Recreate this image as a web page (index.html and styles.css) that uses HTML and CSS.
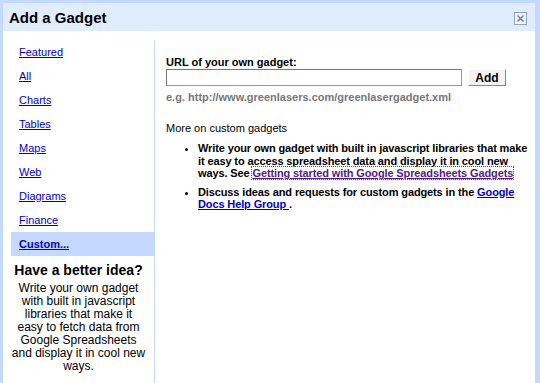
FILE: index.html
```html
<!DOCTYPE html>
<html lang="en">

<head>
  <meta charset="UTF-8">
  <title>Add a Gadget</title>
  <link rel="stylesheet" href="styles.css">
</head>

<body>
  <div class="dialog">
    <div class="dialog-header">
      <h1 class="dialog-title">Add a Gadget</h1>
      <a href="#" class="close-btn" title="Close">
        <svg width="11" height="11" viewBox="0 0 11 11">
          <path d="M2.5 2.5 L8.5 8.5 M8.5 2.5 L2.5 8.5" stroke="#6d86b4" stroke-width="1.6" fill="none"/>
        </svg>
      </a>
    </div>
    <div class="dialog-body">
      <div class="sidebar">
        <ul class="nav">
          <li><a href="#">Featured</a></li>
          <li><a href="#">All</a></li>
          <li><a href="#">Charts</a></li>
          <li><a href="#">Tables</a></li>
          <li><a href="#">Maps</a></li>
          <li><a href="#">Web</a></li>
          <li><a href="#">Diagrams</a></li>
          <li><a href="#">Finance</a></li>
          <li class="selected"><a href="#">Custom...</a></li>
        </ul>
        <div class="idea">
          <h2 class="idea-title">Have a better idea?</h2>
          <p class="idea-text">Write your own gadget with built in javascript libraries that make it easy to fetch data from Google Spreadsheets and display it in cool new ways.</p>
        </div>
      </div>
      <div class="content">
        <label class="url-label" for="gadget-url">URL of your own gadget:</label>
        <div class="url-row">
          <input type="text" id="gadget-url" class="url-input">
          <button class="add-btn">Add</button>
        </div>
        <p class="url-hint">e.g. http://www.greenlasers.com/greenlasergadget.xml</p>
        <p class="more">More on custom gadgets</p>
        <ul class="more-list">
          <li>Write your own gadget with built in javascript libraries that make it easy to access spreadsheet data and display it in cool new ways. See <a href="#" class="visited focused">Getting started with Google Spreadsheets Gadgets</a></li>
          <li>Discuss ideas and requests for custom gadgets in the <a href="#">Google Docs Help Group </a>.</li>
        </ul>
      </div>
    </div>
  </div>
</body>

</html>
```

FILE: styles.css
```css
* {
  box-sizing: border-box;
}

body {
  margin: 0;
  font-family: "Liberation Sans", Arial, sans-serif;
  font-size: 11px;
  color: #000;
  background: #fff;
}

a {
  color: #0000cc;
}

.dialog {
  width: 540px;
  height: 383px;
  border: 3px solid #c3d9ff;
  border-right-width: 5px;
  border-bottom: none;
  display: flex;
  flex-direction: column;
}

.dialog-header {
  background: #e0ecff;
  height: 28px;
  display: flex;
  align-items: center;
  justify-content: space-between;
  padding: 0 8px 0 6px;
}

.dialog-title {
  margin: 0;
  font-size: 15px;
  font-weight: bold;
}

.close-btn {
  display: flex;
  width: 13px;
  height: 13px;
  border: 1px solid #8ba3cc;
  background: #f2f6fc;
  align-items: center;
  justify-content: center;
  margin-top: 2px;
}

.dialog-body {
  flex: 1;
  display: flex;
  padding-top: 9px;
}

.sidebar {
  width: 152px;
  border-right: 1px solid #c3d9ff;
  display: flex;
  flex-direction: column;
}

.nav {
  list-style: none;
  margin: 0;
  padding: 0 0 0 8px;
}

.nav li {
  height: 24px;
  line-height: 24px;
  padding-left: 8px;
}

.nav li.selected {
  background: #c3d9ff;
  font-weight: bold;
}

.idea {
  text-align: center;
  padding: 6px 8px 0 8px;
}

.idea-title {
  margin: 0 0 4px 0;
  font-size: 14px;
  font-weight: bold;
}

.idea-text {
  margin: 0;
  font-size: 12px;
  line-height: 13px;
}

.content {
  flex: 1;
  padding: 16px 4px 0 11px;
}

.url-label {
  display: block;
  font-weight: bold;
  margin-bottom: 1px;
}

.url-row {
  display: flex;
  align-items: flex-start;
  gap: 6px;
}

.url-input {
  width: 296px;
  height: 17px;
  border: 1px solid #999;
  border-top-color: #777;
  border-left-color: #777;
  padding: 0 2px;
  font: inherit;
}

.add-btn {
  width: 38px;
  height: 17px;
  padding: 0;
  font: inherit;
  font-size: 12px;
  font-weight: bold;
  background: #f3f3f3;
  border: 1px solid #fff;
  border-right-color: #888;
  border-bottom-color: #888;
}

.url-hint {
  margin: 5px 0 0 0;
  color: #777;
  font-weight: bold;
}

.more {
  margin: 19px 0 0 0;
}

.more-list {
  margin: 8px 0 0 0;
  padding-left: 32px;
  font-weight: bold;
  letter-spacing: -0.12px;
}

.more-list li {
  line-height: 12.5px;
  margin-bottom: 6px;
}

.more-list a.visited {
  color: #551a8b;
}

.more-list a.focused {
  outline: 1px dotted #555;
}
```
